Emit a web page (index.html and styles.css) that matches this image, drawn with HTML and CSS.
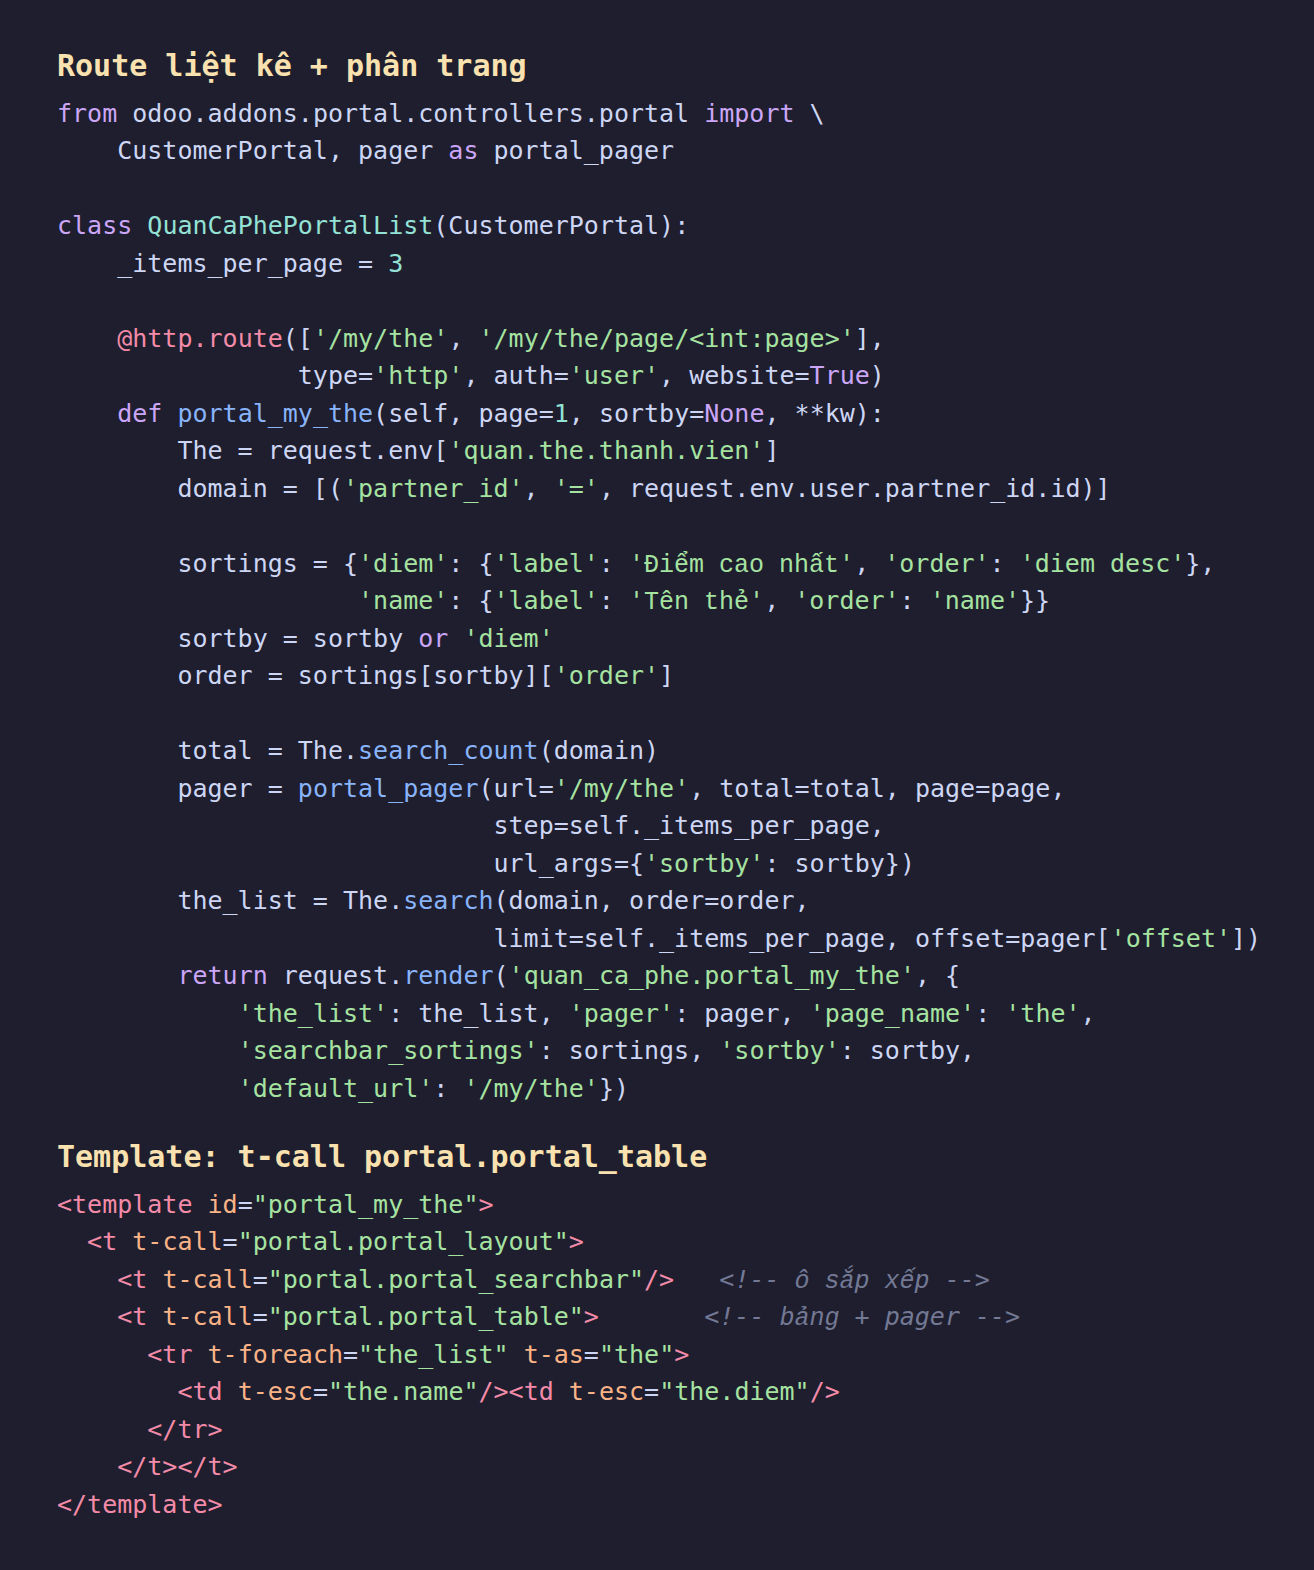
FILE: index.html
```html
<!DOCTYPE html>
<html lang="vi">
<head>
<meta charset="utf-8">
<title>Route liệt kê + phân trang</title>
<link rel="stylesheet" href="styles.css">
</head>
<body>
<main class="doc">
<section class="block">
<h2 class="title">Route liệt kê + phân trang</h2>
<pre class="code"><span class="kw">from</span> odoo.addons.portal.controllers.portal <span class="kw">import</span> \
    CustomerPortal, pager <span class="kw">as</span> portal_pager

<span class="kw">class</span> <span class="cls">QuanCaPhePortalList</span>(CustomerPortal):
    _items_per_page = <span class="num">3</span>

    <span class="dec">@http.route</span>([<span class="str">'/my/the'</span>, <span class="str">'/my/the/page/&lt;int:page&gt;'</span>],
                type=<span class="str">'http'</span>, auth=<span class="str">'user'</span>, website=<span class="kw">True</span>)
    <span class="kw">def</span> <span class="fn">portal_my_the</span>(self, page=<span class="num">1</span>, sortby=<span class="kw">None</span>, **kw):
        The = request.env[<span class="str">'quan.the.thanh.vien'</span>]
        domain = [(<span class="str">'partner_id'</span>, <span class="str">'='</span>, request.env.user.partner_id.id)]

        sortings = {<span class="str">'diem'</span>: {<span class="str">'label'</span>: <span class="str">'<span class="vi">Điểm cao nhất</span>'</span>, <span class="str">'order'</span>: <span class="str">'diem desc'</span>},
                    <span class="str">'name'</span>: {<span class="str">'label'</span>: <span class="str">'<span class="vi">Tên thẻ</span>'</span>, <span class="str">'order'</span>: <span class="str">'name'</span>}}
        sortby = sortby <span class="kw">or</span> <span class="str">'diem'</span>
        order = sortings[sortby][<span class="str">'order'</span>]

        total = The.<span class="fn">search_count</span>(domain)
        pager = <span class="fn">portal_pager</span>(url=<span class="str">'/my/the'</span>, total=total, page=page,
                             step=self._items_per_page,
                             url_args={<span class="str">'sortby'</span>: sortby})
        the_list = The.<span class="fn">search</span>(domain, order=order,
                             limit=self._items_per_page, offset=pager[<span class="str">'offset'</span>])
        <span class="kw">return</span> request.<span class="fn">render</span>(<span class="str">'quan_ca_phe.portal_my_the'</span>, {
            <span class="str">'the_list'</span>: the_list, <span class="str">'pager'</span>: pager, <span class="str">'page_name'</span>: <span class="str">'the'</span>,
            <span class="str">'searchbar_sortings'</span>: sortings, <span class="str">'sortby'</span>: sortby,
            <span class="str">'default_url'</span>: <span class="str">'/my/the'</span>})</pre>
</section>
<section class="block">
<h2 class="title">Template: t-call portal.portal_table</h2>
<pre class="code"><span class="tag">&lt;template</span> <span class="attr">id</span>=<span class="str">"portal_my_the"</span><span class="tag">&gt;</span>
  <span class="tag">&lt;t</span> <span class="attr">t-call</span>=<span class="str">"portal.portal_layout"</span><span class="tag">&gt;</span>
    <span class="tag">&lt;t</span> <span class="attr">t-call</span>=<span class="str">"portal.portal_searchbar"</span><span class="tag">/&gt;</span>   <span class="cmt">&lt;!-- <span class="vi">ô sắp xếp</span> --&gt;</span>
    <span class="tag">&lt;t</span> <span class="attr">t-call</span>=<span class="str">"portal.portal_table"</span><span class="tag">&gt;</span>       <span class="cmt">&lt;!-- <span class="vi">bảng</span> + pager --&gt;</span>
      <span class="tag">&lt;tr</span> <span class="attr">t-foreach</span>=<span class="str">"the_list"</span> <span class="attr">t-as</span>=<span class="str">"the"</span><span class="tag">&gt;</span>
        <span class="tag">&lt;td</span> <span class="attr">t-esc</span>=<span class="str">"the.name"</span><span class="tag">/&gt;&lt;td</span> <span class="attr">t-esc</span>=<span class="str">"the.diem"</span><span class="tag">/&gt;</span>
      <span class="tag">&lt;/tr&gt;</span>
    <span class="tag">&lt;/t&gt;&lt;/t&gt;</span>
<span class="tag">&lt;/template&gt;</span></pre>
</section>
</main>
</body>
</html>
```

FILE: styles.css
```css
html, body {
  margin: 0;
  padding: 0;
  background: #1e1e2e;
}

body {
  color: #cdd6f4;
  font-family: "DejaVu Sans Mono", "Liberation Mono", monospace;
}

.doc {
  padding: 47px 57px 40px 57px;
  display: flex;
  flex-direction: column;
  gap: 31px;
}

.title {
  margin: 0 0 10px 0;
  font-size: 30px;
  line-height: 37.5px;
  font-weight: bold;
  color: #f9e2af;
}

.code {
  margin: 0;
  font-family: "DejaVu Sans Mono", "Liberation Mono", monospace;
  font-size: 25px;
  line-height: 37.5px;
  white-space: pre;
  color: #cdd6f4;
}

.vi {
  font-family: "Liberation Mono", "DejaVu Sans Mono", monospace;
  line-height: 1;
}

.kw { color: #cba6f7; }
.cls { color: #94e2d5; }
.num { color: #94e2d5; }
.str { color: #a6e3a1; }
.fn { color: #89b4fa; }
.dec { color: #f38ba8; }
.tag { color: #f38ba8; }
.attr { color: #fab387; }
.cmt { color: #737994; font-style: italic; }
```
